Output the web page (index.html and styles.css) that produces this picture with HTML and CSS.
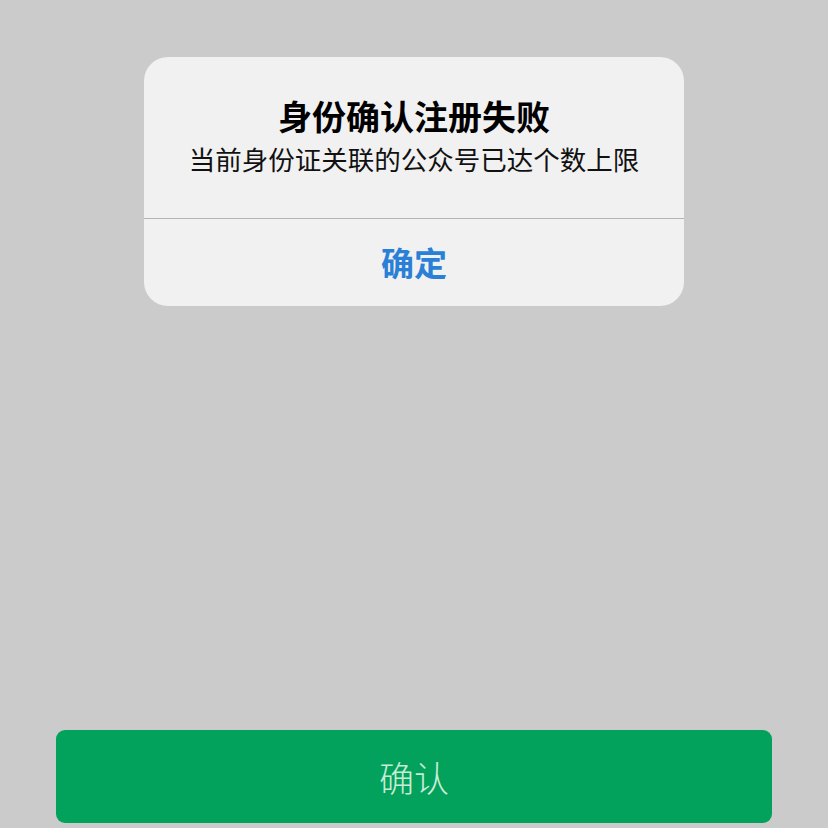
FILE: index.html
```html
<!DOCTYPE html>
<html lang="zh-CN">
<head>
    <meta charset="UTF-8">
    <meta name="viewport" content="width=device-width, initial-scale=1.0">
    <title>身份确认</title>
    <link rel="stylesheet" href="styles.css">
</head>
<body>

<div class="screen">
    <!-- Alert dialog -->
    <div class="alert">
        <div class="alert-body">
            <h2 class="alert-title">身份确认注册失败</h2>
            <p class="alert-text">当前身份证关联的公众号已达个数上限</p>
        </div>
        <div class="alert-action">确定</div>
    </div>

    <!-- Bottom confirm button -->
    <button class="confirm-btn">确认</button>
</div>

</body>
</html>
```

FILE: styles.css
```css
html, body {
    margin: 0;
    padding: 0;
}
body {
    background-color: #cbcbcb;
    font-family: "Noto Sans CJK SC", "Noto Sans", sans-serif;
}
.screen {
    height: 828px;
    display: flex;
    flex-direction: column;
    align-items: center;
    box-sizing: border-box;
    padding-top: 57px;
}
.alert {
    width: 540px;
    background-color: #f1f1f1;
    border-radius: 24px;
    overflow: hidden;
}
.alert-body {
    height: 162px;
    box-sizing: border-box;
    padding-top: 37px;
    text-align: center;
    border-bottom: 1px solid #b4b4b4;
}
.alert-title {
    margin: 0;
    font-size: 34px;
    font-weight: bold;
    line-height: 44px;
    color: #000;
}
.alert-text {
    margin: 0;
    font-size: 26.5px;
    line-height: 42px;
    color: #111;
}
.alert-action {
    height: 87px;
    line-height: 87px;
    text-align: center;
    font-size: 33px;
    font-weight: bold;
    color: #2a7fd6;
}
.confirm-btn {
    margin-top: auto;
    margin-bottom: 5px;
    width: 716px;
    height: 93px;
    border: none;
    border-radius: 9px;
    background-color: #02a15c;
    color: #c8ecd6;
    font-family: "Noto Sans CJK SC", sans-serif;
    font-size: 35px;
    font-weight: 300;
}
```
